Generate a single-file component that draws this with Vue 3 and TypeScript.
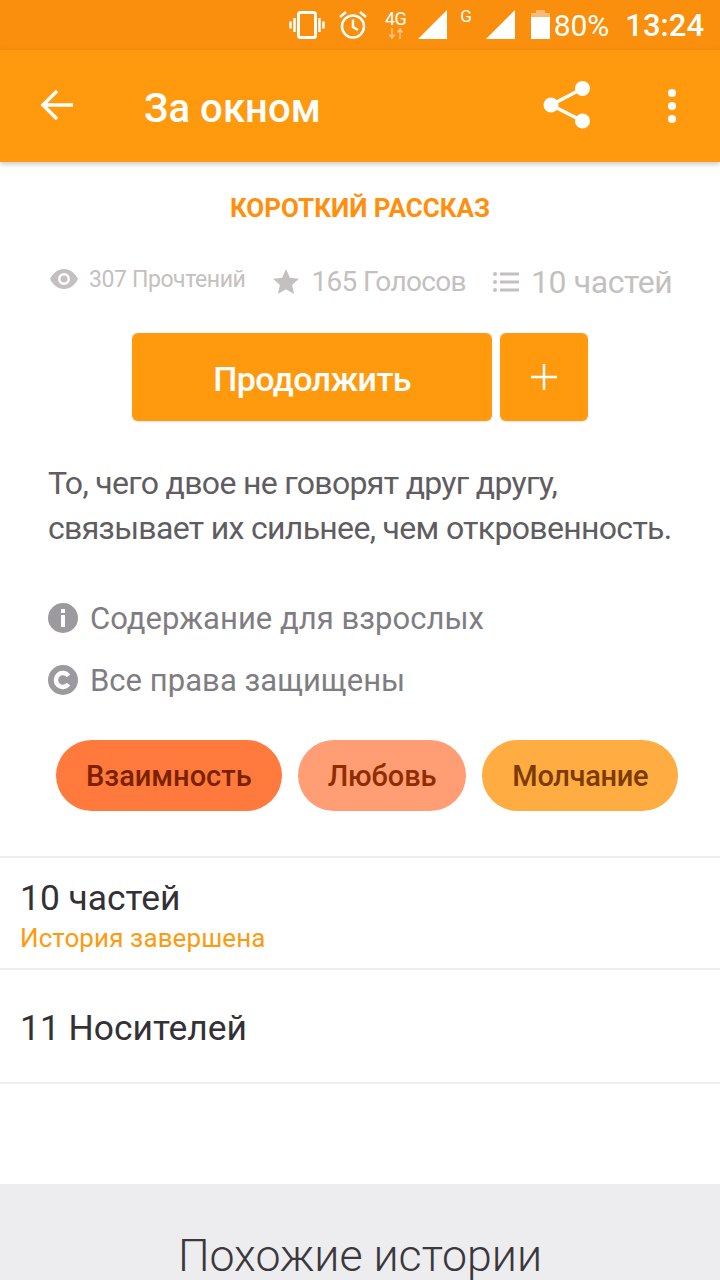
<template>
  <div class="story-page">
    <div class="status-bar">
      <svg class="st-vibrate" viewBox="0 0 36 28" width="36" height="28">
        <rect x="9.500" y="1.500" width="17" height="25" rx="2" fill="none" stroke="#fff" stroke-width="3" />
        <path d="M5.500 7v14M1.500 10.500v7M30.500 7v14M34.500 10.500v7" stroke="#fff" stroke-width="2.500" fill="none" />
      </svg>
      <svg class="st-alarm" viewBox="0 0 28 30" width="28" height="30">
        <circle cx="14" cy="16.500" r="11" fill="none" stroke="#fff" stroke-width="2.500" />
        <path d="M14 9.500v7.500l5 3M1 7l6-5M27 7l-6-5" fill="none" stroke="#fff" stroke-width="2.500" />
      </svg>
      <div class="st-net">
        <span class="st-net-label">4G</span>
        <svg viewBox="0 0 16 11" width="16" height="11">
          <path d="M4 0v9M1.500 6.500L4 10l2.500-3.500M12 11V2M9.500 4.500L12 1l2.500 3.500" fill="none" stroke="#f7c48a" stroke-width="1.500" />
        </svg>
      </div>
      <svg class="st-signal" viewBox="0 0 29 29" width="29" height="29"><path d="M0 29L29 0v29z" fill="#fff" /></svg>
      <span class="st-g">G</span>
      <svg class="st-signal" viewBox="0 0 29 29" width="29" height="29"><path d="M0 29L29 0v29z" fill="#fff" /></svg>
      <svg class="st-battery" viewBox="0 0 19 29" width="19" height="29">
        <path d="M5 0h9v3h5v6H0V3h5z" fill="#fbb978" />
        <path d="M0 7h19v22H0z" fill="#fff" />
      </svg>
      <span class="st-percent">80%</span>
      <span class="st-time">13:24</span>
    </div>

    <header class="app-bar">
      <svg class="back" viewBox="0 0 34 32" width="34" height="32">
        <path d="M33 16H3M17 2L3 16l14 14" fill="none" stroke="#fff" stroke-width="3.500" />
      </svg>
      <h1>За окном</h1>
      <svg class="share" viewBox="0 0 48 48" width="48" height="48">
        <circle cx="8" cy="24" r="7.500" fill="#fff" />
        <circle cx="39.500" cy="7.500" r="7.500" fill="#fff" />
        <circle cx="39.500" cy="40" r="7.500" fill="#fff" />
        <path d="M8 24L39.500 7.500M8 24l31.500 16" stroke="#fff" stroke-width="3.500" fill="none" />
      </svg>
      <div class="more"><i></i><i></i><i></i></div>
    </header>

    <main class="details">
      <div class="category">КОРОТКИЙ РАССКАЗ</div>

      <div class="stats">
        <div class="stat stat-reads">
          <svg viewBox="0 0 28 20" width="28" height="20">
            <path fill-rule="evenodd" d="M14 0C8 0 3 4 0 10c3 6 8 10 14 10s11-4 14-10C25 4 20 0 14 0zm0 4a6 6 0 1 1 0 12 6 6 0 0 1 0-12z" fill="#c4c0c0" />
            <circle cx="14" cy="10" r="3.500" fill="#c4c0c0" />
          </svg>
          <span>307 Прочтений</span>
        </div>
        <div class="stat stat-votes">
          <svg viewBox="0 0 26 25" width="26" height="25">
            <path d="M13 0l3.900 8.800 9.100.9-6.900 6.200 2 9.100-8.100-4.800L4.900 25l2-9.100L0 9.700l9.100-.9z" fill="#c4c0c0" />
          </svg>
          <span>165 Голосов</span>
        </div>
        <div class="stat stat-parts">
          <svg viewBox="0 0 26 22" width="26" height="22">
            <circle cx="2" cy="3" r="2" fill="#c4c0c0" />
            <circle cx="2" cy="11" r="2" fill="#c4c0c0" />
            <circle cx="2" cy="19" r="2" fill="#c4c0c0" />
            <path d="M7 1.500h19v3H7zM7 9.500h19v3H7zM7 17.500h19v3H7z" fill="#c4c0c0" />
          </svg>
          <span>10 частей</span>
        </div>
      </div>

      <div class="actions">
        <button class="btn btn-continue">Продолжить</button>
        <button class="btn btn-add">
          <svg viewBox="0 0 26 26" width="26" height="26">
            <path d="M13 0v26M0 13h26" stroke="#fff" stroke-width="2.500" fill="none" />
          </svg>
        </button>
      </div>

      <p class="summary">То, чего двое не говорят друг другу,<br />связывает их сильнее, чем откровенность.</p>

      <div class="notice notice-first">
        <svg viewBox="0 0 30 30" width="30" height="30">
          <circle cx="15" cy="15" r="15" fill="#9c9a9e" />
          <path d="M13 6h4v4h-4zM13 12h4v12h-4z" fill="#fff" />
        </svg>
        <span>Содержание для взрослых</span>
      </div>
      <div class="notice">
        <svg viewBox="0 0 30 30" width="30" height="30">
          <circle cx="15" cy="15" r="15" fill="#9c9a9e" />
          <path d="M20.500 10.800a7 7 0 1 0 0 8.400" fill="none" stroke="#fff" stroke-width="4.500" />
        </svg>
        <span>Все права защищены</span>
      </div>

      <div class="tags">
        <span v-for="tag in tags" :key="tag.name" class="tag" :class="tag.kind">{{ tag.name }}</span>
      </div>
    </main>

    <section class="rows">
      <div class="row row-parts">
        <div class="row-title">10 частей</div>
        <div class="row-sub">История завершена</div>
      </div>
      <div class="row row-owners">
        <div class="row-title">11 Носителей</div>
      </div>
    </section>

    <section class="similar">
      <h2>Похожие истории</h2>
    </section>
  </div>
</template>

<script setup lang="ts">
interface Tag {
  name: string
  kind: string
}

const tags: Tag[] = [
  { name: 'Взаимность', kind: 'tag-red' },
  { name: 'Любовь', kind: 'tag-peach' },
  { name: 'Молчание', kind: 'tag-amber' }
]
</script>

<style>
html,
body {
  margin: 0;
  background: #fff;
}
</style>

<style scoped>
.story-page {
  width: 720px;
  height: 1280px;
  overflow: hidden;
  background: #fff;
  font-family: Roboto, "Liberation Sans", sans-serif;
  display: flex;
  flex-direction: column;
}

.status-bar {
  height: 50px;
  flex: none;
  background: #f98f0c;
  display: flex;
  align-items: center;
  justify-content: flex-end;
  padding-right: 16px;
  color: #fff;
  box-sizing: border-box;
}

.status-bar svg {
  flex: none;
}

.st-vibrate {
  margin-right: 14px;
}

.st-alarm {
  margin-right: 18px;
}

.st-net {
  width: 22px;
  display: flex;
  flex-direction: column;
  align-items: center;
  margin-right: 11px;
}

.st-net-label {
  font-size: 18px;
  line-height: 18px;
  margin-top: -2px;
  letter-spacing: -0.5px;
}

.st-signal {
  margin-top: -2px;
}

.st-g {
  font-size: 17px;
  width: 39px;
  text-align: center;
  line-height: 18px;
  margin-bottom: 18px;
}

.st-battery {
  margin-left: 16px;
  margin-top: -2px;
}

.st-percent {
  font-size: 30px;
  margin-left: 4px;
  margin-top: 1px;
}

.st-time {
  font-size: 31px;
  font-weight: 500;
  margin-left: 16px;
  margin-top: 1px;
}

.app-bar {
  height: 112px;
  background: #ff9a0e;
  display: flex;
  align-items: center;
  box-shadow: 0 2px 5px rgba(90, 90, 90, 0.35);
  position: relative;
  flex: none;
}

.back {
  margin-left: 40px;
  margin-top: -2px;
}

.app-bar h1 {
  margin: 4px 0 0 70px;
  font-size: 40px;
  letter-spacing: 0.1px;
  font-weight: 500;
  color: #fff;
  flex: 1;
}

.share {
  margin-right: 77px;
  margin-top: -2px;
}

.more {
  display: flex;
  flex-direction: column;
  gap: 5px;
  margin-right: 44px;
}

.more i {
  display: block;
  width: 8px;
  height: 8px;
  border-radius: 50%;
  background: #fff;
}

.details {
  padding: 0 48px;
  flex: none;
}

.category {
  margin-top: 30px;
  text-align: center;
  font-size: 26px;
  line-height: 32px;
  font-weight: 700;
  color: #ff8f0c;
}

.stats {
  display: flex;
  align-items: center;
  margin-top: 34px;
  height: 48px;
  color: #c4c0c0;
  white-space: nowrap;
}

.stat {
  display: flex;
  align-items: center;
}

.stat-reads {
  margin-left: 2px;
  font-size: 23px;
  letter-spacing: -0.4px;
  gap: 11px;
  margin-top: -6px;
}

.stat-votes {
  margin-left: 28px;
  font-size: 28px;
  letter-spacing: -0.65px;
  gap: 12px;
  margin-top: -2px;
}

.stat-parts {
  margin-left: 27px;
  font-size: 32px;
  letter-spacing: -0.4px;
  gap: 12px;
  margin-top: 0;
}

.actions {
  display: flex;
  justify-content: center;
  gap: 8px;
  margin-top: 27px;
}

.btn {
  border: none;
  height: 88px;
  border-radius: 6px;
  background: #ff9a0e;
  color: #fff;
  font-family: inherit;
  box-shadow: 0 1px 2px rgba(0, 0, 0, 0.12);
  padding: 0;
  display: flex;
  align-items: center;
  justify-content: center;
}

.btn-continue {
  width: 360px;
  font-size: 34px;
  letter-spacing: -0.6px;
  font-weight: 500;
  padding-top: 4px;
}

.btn-add {
  width: 88px;
}

.summary {
  margin: 40px 0 0;
  font-size: 32px;
  letter-spacing: -0.68px;
  line-height: 45px;
  color: #5f5d61;
  white-space: nowrap;
}

.notice {
  display: flex;
  align-items: center;
  gap: 12px;
  margin-top: 24px;
  height: 38px;
  font-size: 31px;
  letter-spacing: 0.04px;
  color: #7f7d82;
  white-space: nowrap;
}

.notice-first {
  margin-top: 48px;
}

.tags {
  display: flex;
  gap: 16px;
  margin: 41px -8px 0 8px;
}

.tag {
  height: 71px;
  border-radius: 36px;
  padding: 0 30px;
  display: flex;
  align-items: center;
  font-size: 29px;
  font-weight: 500;
  white-space: nowrap;
}

.tag-red {
  background: #ff7a3c;
  color: #7a2200;
}

.tag-peach {
  background: #ff9e75;
  color: #8f2c00;
  letter-spacing: -0.1px;
}

.tag-amber {
  background: #ffac42;
  color: #7c3b00;
  letter-spacing: -0.3px;
}

.rows {
  margin-top: 45px;
  border-top: 2px solid #eeeeee;
  flex: none;
}

.row {
  padding: 0 20px;
  border-bottom: 2px solid #eeeeee;
  box-sizing: border-box;
}

.row-parts {
  height: 112px;
  padding-top: 20px;
}

.row-owners {
  height: 114px;
  padding-top: 38px;
}

.row-title {
  font-size: 35.4px;
  line-height: 40px;
  color: #333136;
}

.row-sub {
  font-size: 26px;
  letter-spacing: 0.1px;
  line-height: 32px;
  color: #ff9a0e;
  margin-top: 4px;
}

.similar {
  margin-top: 100px;
  flex: 1;
  background: #edecee;
  text-align: center;
}

.similar h2 {
  margin: 49px 0 0;
  font-size: 44.7px;
  line-height: 46px;
  font-weight: 300;
  color: #3a383c;
}
</style>
